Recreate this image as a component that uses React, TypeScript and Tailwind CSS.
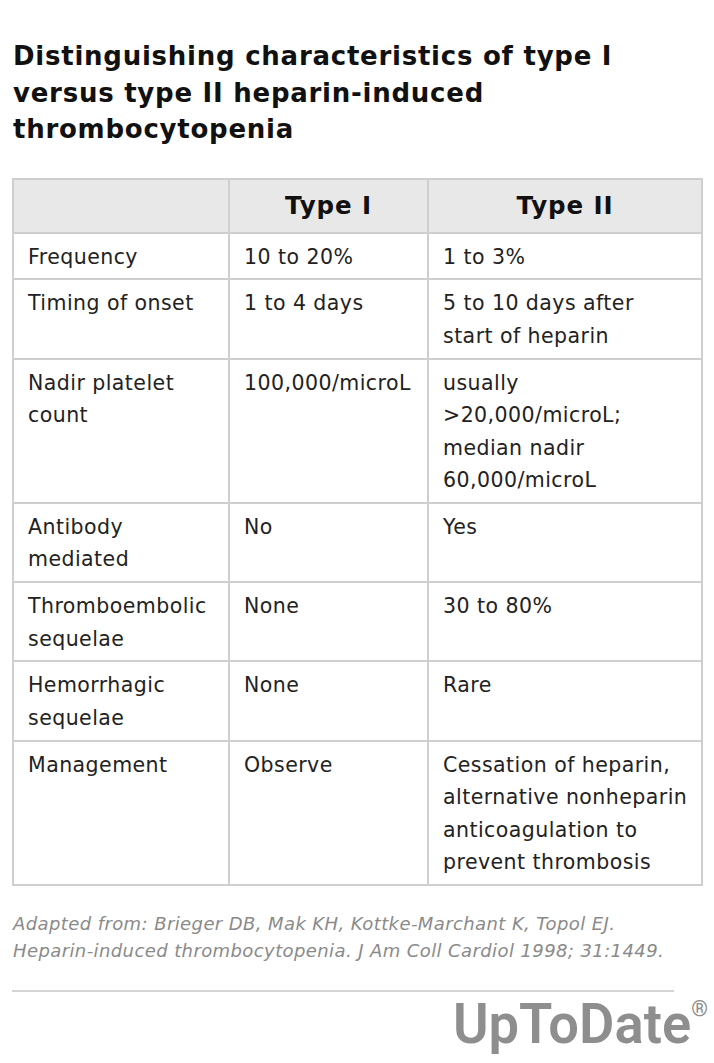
import React from "react";

const rows: [string, string, React.ReactNode][] = [
  ["Frequency", "10 to 20%", "1 to 3%"],
  ["Timing of onset", "1 to 4 days", <>5 to 10 days after<br />start of heparin</>],
  ["Nadir platelet count", "100,000/microL", "usually >20,000/microL; median nadir 60,000/microL"],
  ["Antibody mediated", "No", "Yes"],
  ["Thromboembolic sequelae", "None", "30 to 80%"],
  ["Hemorrhagic sequelae", "None", "Rare"],
  ["Management", "Observe", "Cessation of heparin, alternative nonheparin anticoagulation to prevent thrombosis"],
];

export default function App() {
  return (
    <div className="min-h-[1063px] w-[714px] bg-white text-[#222]" style={{ fontFamily: '"DejaVu Sans", Verdana, sans-serif' }}>
      <div className="pl-[13px] pr-[12px] pt-[38px]">
        <h1 className="m-0 w-[660px] text-[26px] font-bold leading-[36.5px] tracking-[0.75px] text-[#111]">
          Distinguishing characteristics of type I versus type II heparin-induced thrombocytopenia
        </h1>
      </div>
      <div className="pl-[12px] pt-[30px]">
        <table className="w-[689px] table-fixed border-collapse">
          <colgroup>
            <col className="w-[216px]" />
            <col className="w-[199px]" />
            <col className="w-[274px]" />
          </colgroup>
          <thead>
            <tr className="bg-[#e8e8e8]">
              <th className="border-2 border-[#cfcfcf] py-[10px]"></th>
              <th className="border-2 border-[#cfcfcf] py-[10px] text-center text-[24.5px] font-bold leading-[32px] tracking-[0.9px] text-[#111]">Type I</th>
              <th className="border-2 border-[#cfcfcf] py-[10px] text-center text-[24.5px] font-bold leading-[32px] tracking-[0.9px] text-[#111]">Type II</th>
            </tr>
          </thead>
          <tbody>
            {rows.map((r, i) => (
              <tr key={i}>
                {r.map((c, j) => (
                  <td
                    key={j}
                    className="border-2 border-[#cfcfcf] pl-[14px] pr-[6px] pt-[7px] pb-[5.5px] align-top text-[20.5px] leading-[32.4px] tracking-[0.45px] text-[#222]"
                  >
                    {c}
                  </td>
                ))}
              </tr>
            ))}
          </tbody>
        </table>
      </div>
      <div className="pl-[13px] pt-[24px] pr-[6px]">
        <p className="m-0 text-[18px] italic leading-[27.5px] tracking-[0.4px] text-[#8a8a8a]">
          Adapted from: Brieger DB, Mak KH, Kottke-Marchant K, Topol EJ.
          <br />
          Heparin-induced thrombocytopenia. J Am Coll Cardiol 1998; 31:1449.
        </p>
      </div>
      <div className="pl-[12px] pt-[25px]">
        <div className="h-[2px] w-[662px] bg-[#d4d4d4]"></div>
      </div>
      <div className="flex justify-end pr-[6px] pt-[2px]">
        <div
          className="inline-flex origin-right scale-x-[0.97] items-start text-[56px] font-semibold leading-[60px] text-[#8e8e8e]"
          style={{ fontFamily: 'Roboto, "Liberation Sans", sans-serif' }}
        >
          <span>UpToDate</span>
          <span className="mt-[4px] text-[22px] font-medium leading-[22px]">®</span>
        </div>
      </div>
    </div>
  );
}
